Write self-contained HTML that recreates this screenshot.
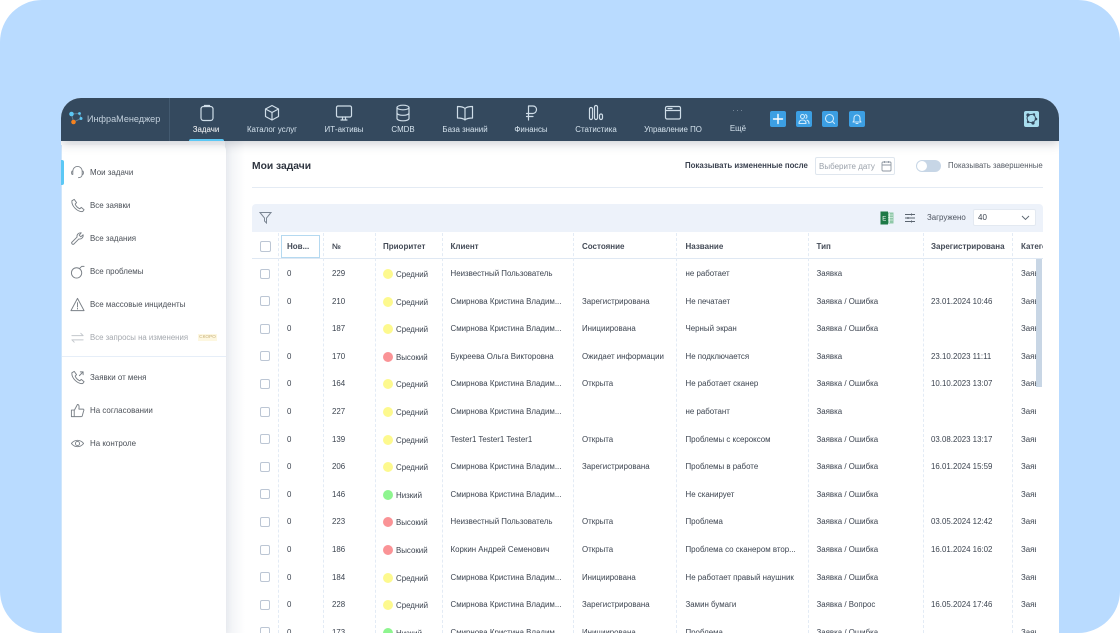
<!DOCTYPE html>
<html lang="ru">
<head>
<meta charset="utf-8">
<style>
html,body{margin:0;padding:0;width:1120px;height:633px;overflow:hidden;background:#fff}
*{box-sizing:border-box}
body{font-family:"Liberation Sans",sans-serif;font-size:7.9px;color:#3c4450}
.bg{position:absolute;left:0;top:0;width:1120px;height:633px;background:#b9dbff;border-radius:42px;overflow:hidden}
.win{position:absolute;left:61px;top:98px;width:998px;height:535px;background:#fff;border-radius:20px 20px 0 0;overflow:hidden;filter:blur(.3px)}
.abs,.nav,.si,.sic,.bb,.v,.r,.r span{position:absolute}
.top{position:absolute;left:0;top:0;width:998px;height:43px;background:#34495e;box-shadow:0 2px 10px rgba(40,50,70,.25);z-index:3}
.nav{top:27px;color:#d5e3ee;font-size:7.9px;white-space:nowrap;transform:translateX(-50%);line-height:10px}
.ni{position:absolute;top:6px;width:18px;height:18px;fill:none;stroke:#cfdde8;stroke-width:1.2;stroke-linecap:round;stroke-linejoin:round}
.bb{top:13px;width:16px;height:16px;border-radius:2px;background:#3c9fe3}
.bb svg{position:absolute;left:2px;top:2px;width:12px;height:12px;fill:none;stroke:#cfeafb;stroke-width:1.1;stroke-linecap:round;stroke-linejoin:round}
.main-sh{position:absolute;left:164px;top:43px;width:20px;height:492px;background:linear-gradient(90deg,#eef0f4,#fff)}
.side{position:absolute;left:0;top:47px;width:165px;height:488px;background:#fff;border-radius:0 5px 0 0;box-shadow:2px 0 6px rgba(60,70,90,.05);z-index:2;border-left:1px solid #cfe6fb}
.si{left:29px;white-space:nowrap;line-height:10px;font-size:7.95px;color:#4a4f57;z-index:2}
.sic{left:9px;width:15px;height:15px;fill:none;stroke:#7a8087;stroke-width:1;stroke-linecap:round;stroke-linejoin:round;z-index:2;margin-top:.5px}
.v{top:135px;width:0;height:400px;border-left:1px dashed #e3ebf5}
.r{left:191px;width:784px;height:27px;overflow:hidden;z-index:1}
.r span{top:9px;line-height:10px;white-space:nowrap}
.c{left:8px;top:8.5px!important;width:10px;height:10px;border:1px solid #bcc6d4;border-radius:2px}
.n{left:35px}.i{left:80px}.d{left:131px;top:9px!important;width:10px;height:10px;border-radius:50%}
.p{left:144px;top:10px!important}.k{left:198.5px}.s{left:330px}.t{left:433.5px}.y{left:564.5px}.g{left:679px}.z{left:769px}
.Y{background:#fdf98e}.R{background:#fa9396}.G{background:#8ef58f}
.th{position:absolute;top:144px;line-height:10px;font-weight:bold;font-size:8px;color:#444b57;white-space:nowrap}
</style>
</head>
<body>
<div class="bg"></div>
<div class="win">
  <div class="top">
    <svg class="abs" style="left:7px;top:12px;width:16px;height:16px" viewBox="0 0 16 16"><path d="M3.500 4L11.500 3.500L13 8.500L5.500 12L3.500 4" fill="none" stroke="#5f7a90" stroke-width="1"/><circle cx="3.500" cy="4" r="2.300" fill="#5cc8f5"/><circle cx="11.500" cy="3.500" r="1.400" fill="#5cc8f5"/><circle cx="13" cy="8.500" r="1.500" fill="#5cc8f5"/><circle cx="5.500" cy="12" r="2.300" fill="#f5821f"/></svg>
    <div class="abs" style="left:26px;top:15px;color:#c3d0dc;font-size:9.100px;line-height:12px;white-space:nowrap">ИнфраМенеджер</div>
    <div class="abs" style="left:108px;top:0;width:1px;height:43px;background:#435a70"></div>

    <svg class="ni" style="left:137px" viewBox="0 0 18 18"><rect x="3" y="2.500" width="12" height="14" rx="2.500"/><path d="M6.500 2.500V1.500H11.500V2.500"/></svg>
    <div class="nav" style="left:145px;color:#fff">Задачи</div>
    <div class="abs" style="left:128px;top:41px;width:35px;height:2px;background:#5cc8f5;border-radius:2px 2px 0 0"></div>

    <svg class="ni" style="left:202px" viewBox="0 0 18 18"><path d="M9 1.500L15.500 5V12.500L9 16L2.500 12.500V5ZM2.500 5L9 8.500L15.500 5M9 8.500V16"/></svg>
    <div class="nav" style="left:211px">Каталог услуг</div>

    <svg class="ni" style="left:274px" viewBox="0 0 18 18"><rect x="1.500" y="2" width="15" height="11" rx="1.500"/><path d="M7.500 13V15.500M10.500 13V15.500M6 16H12"/></svg>
    <div class="nav" style="left:283px">ИТ-активы</div>

    <svg class="ni" style="left:333px" viewBox="0 0 18 18"><ellipse cx="9" cy="3.500" rx="6" ry="2.300"/><path d="M3 3.500V14.500C3 15.800 5.700 16.800 9 16.800S15 15.800 15 14.500V3.500M3 9C3 10.300 5.700 11.300 9 11.300S15 10.300 15 9"/></svg>
    <div class="nav" style="left:342px">CMDB</div>

    <svg class="ni" style="left:395px" viewBox="0 0 18 18"><path d="M9 4.500C7.500 3 5 2.500 1.500 2.500V14C5 14 7.500 14.500 9 16C10.500 14.500 13 14 16.500 14V2.500C13 2.500 10.500 3 9 4.500ZM9 4.500V16"/></svg>
    <div class="nav" style="left:404px">База знаний</div>

    <svg class="ni" style="left:461px" viewBox="0 0 18 18"><path d="M6.500 16V2H11C13 2 14.500 3.500 14.500 5.500S13 9.500 11 9.500H4.500M4.500 12.500H11"/></svg>
    <div class="nav" style="left:470px">Финансы</div>

    <svg class="ni" style="left:526px" viewBox="0 0 18 18"><rect x="2.500" y="3.500" width="3" height="12" rx="1.500"/><rect x="7.500" y="1.500" width="3" height="14" rx="1.500"/><rect x="12.500" y="10" width="3" height="5.500" rx="1.500"/></svg>
    <div class="nav" style="left:535px">Статистика</div>

    <svg class="ni" style="left:603px" viewBox="0 0 18 18"><rect x="1.500" y="2.500" width="15" height="12.500" rx="1.500"/><path d="M1.500 6.500H16.500M4 4.500H8"/></svg>
    <div class="nav" style="left:612px">Управление ПО</div>

    <div class="abs" style="left:671px;top:7px;color:#7d8f9f;font-size:9px;line-height:10px;letter-spacing:1px">···</div>
    <div class="nav" style="left:677px;top:26px">Ещё</div>

    <div class="bb" style="left:709px"><svg viewBox="0 0 12 12" style="stroke:#fff;stroke-width:1.400"><path d="M6 1.500V10.500M1.500 6H10.500"/></svg></div>
    <div class="bb" style="left:735px"><svg viewBox="0 0 12 12"><circle cx="4.500" cy="3.500" r="2"/><path d="M1 10.500C1 8 2.500 7 4.500 7S8 8 8 10.500H1M7.500 1.700A2 2 0 0 1 8 5.300M9 7.200C10.300 7.700 11 8.800 11 10.500"/></svg></div>
    <div class="bb" style="left:761px"><svg viewBox="0 0 12 12"><circle cx="5.500" cy="5.500" r="4"/><path d="M8.500 8.500L10.500 10.500"/></svg></div>
    <div class="bb" style="left:788px"><svg viewBox="0 0 12 12"><path d="M2 9H10L9 7.500V5A3 3 0 0 0 3 5V7.500ZM5 10.500H7"/></svg></div>

    <div class="abs" style="left:963px;top:13px;width:15px;height:16px;background:#a9deef;border-radius:2px">
      <svg width="15" height="16" viewBox="0 0 15 16" style="position:absolute;left:0;top:0"><path d="M4 4L10 3L12 8L9 12L4 11L3 7Z" fill="none" stroke="#34495e" stroke-width="1"/><circle cx="4" cy="4" r="1.600" fill="#34495e"/><circle cx="10" cy="3.500" r="1.200" fill="#34495e"/><circle cx="12" cy="8" r="1.300" fill="#34495e"/><circle cx="9" cy="12" r="1.600" fill="#34495e"/><circle cx="4" cy="11" r="1.200" fill="#34495e"/></svg>
    </div>
  </div>

  <div class="main-sh"></div>
  <div class="side"></div>
  <div class="abs" style="left:0;top:62px;width:3px;height:25px;background:#5cc8f5;border-radius:0 2px 2px 0;z-index:2"></div>

  <svg class="sic" style="top:66px" viewBox="0 0 16 16"><path d="M3 8V6.500A5 5 0 0 1 13 6.500V8M3 6.500H2.200C1.500 7 1.500 9.500 2.200 10H3ZM13 6.500H13.800C14.500 7 14.500 9.500 13.800 10H13ZM13 10C13 12.500 11 13.500 9 13.500"/></svg>
  <div class="si" style="top:70px">Мои задачи</div>
  <svg class="sic" style="top:99px" viewBox="0 0 16 16"><path d="M2 3L4.500 1.500L7 5L5.500 6.500C6.500 9 8 10.500 10.500 11.500L12 10L15 12.500L13.500 14.500C8 15 1.500 8.500 2 3Z"/></svg>
  <div class="si" style="top:103px">Все заявки</div>
  <svg class="sic" style="top:132px" viewBox="0 0 16 16"><path d="M2 12L7.500 6.500C7 4 9 1.500 12 2L9.800 4.500L11.500 6.200L14 4C14.500 7 12 9 9.500 8.500L4 14C3 15 1 13 2 12Z"/></svg>
  <div class="si" style="top:136px">Все задания</div>
  <svg class="sic" style="top:165px" viewBox="0 0 16 16"><circle cx="7" cy="9.500" r="5.500"/><path d="M10.500 4.500L12.500 2.500H15"/></svg>
  <div class="si" style="top:169px">Все проблемы</div>
  <svg class="sic" style="top:198px" viewBox="0 0 16 16"><path d="M8 1.500L15 14.500H1ZM8 6V10.500M8 12V12.800"/></svg>
  <div class="si" style="top:202px">Все массовые инциденты</div>
  <svg class="sic" style="top:231px;stroke:#c3c7cc" viewBox="0 0 16 16"><path d="M2 6H14M11.500 3.500L14 6M14 10.500H2M4.500 13L2 10.500"/></svg>
  <div class="si" style="top:235px;color:#a4a8ae;font-size:7.800px">Все запросы на изменения</div>
  <div class="abs" style="left:137px;top:236px;width:19px;height:7px;background:#fdf7e0;color:#c9b27a;font-size:4.800px;line-height:7px;text-align:center;z-index:2">СКОРО</div>
  <div class="abs" style="left:1px;top:258px;width:164px;height:1px;background:#e6eef8;z-index:2"></div>
  <svg class="sic" style="top:271px" viewBox="0 0 16 16"><path d="M2 3L4.500 1.500L7 5L5.500 6.500C6.500 9 8 10.500 10.500 11.500L12 10L15 12.500L13.500 14.500C8 15 1.500 8.500 2 3ZM10 6L14 2M11 2H14V5"/></svg>
  <div class="si" style="top:275px">Заявки от меня</div>
  <svg class="sic" style="top:304px" viewBox="0 0 16 16"><path d="M1.500 7.500H4.500V14.500H1.500ZM4.500 8L8 1.500C9.500 1.500 10 3 9.500 6.500H14C15 6.500 15 8 14.500 8.500L13 14C12.800 14.500 12.500 14.500 12 14.500H4.500"/></svg>
  <div class="si" style="top:308px">На согласовании</div>
  <svg class="sic" style="top:337px" viewBox="0 0 16 16"><path d="M1.500 8C5 3.500 11 3.500 14.500 8C11 12.500 5 12.500 1.500 8Z"/><circle cx="8" cy="8" r="2.200"/></svg>
  <div class="si" style="top:341px">На контроле</div>

  <div class="abs" style="left:191px;top:62px;font-size:10.300px;font-weight:bold;color:#2f3540;line-height:13px">Мои задачи</div>
  <div class="abs" style="left:624px;top:63px;font-weight:bold;font-size:7.850px;color:#3b4250;line-height:10px;white-space:nowrap">Показывать измененные после</div>
  <div class="abs" style="left:754px;top:59px;width:80px;height:18px;border:1px solid #dfe6ee;border-radius:2px;color:#9aa1aa;padding:4px 0 0 3px;line-height:10px;font-size:8px">Выберите дату
    <svg class="abs" style="left:65px;top:2px;width:11px;height:12px;fill:none;stroke:#8d96a1;stroke-width:.9" viewBox="0 0 11 12"><rect x="1" y="2" width="9" height="9" rx="1"/><path d="M1 5H10M3.500 1V3M7.500 1V3"/></svg>
  </div>
  <div class="abs" style="left:855px;top:62px;width:25px;height:12px;background:#c7d6e6;border-radius:6px"><div class="abs" style="left:1px;top:1px;width:10px;height:10px;background:#fff;border-radius:50%"></div></div>
  <div class="abs" style="left:887px;top:63px;width:95px;overflow:hidden;line-height:10px;white-space:nowrap;font-size:7.800px;color:#565c66">Показывать завершенные</div>
  <div class="abs" style="left:191px;top:89px;width:791px;height:1px;background:#e4ebf4"></div>

  <div class="abs" style="left:191px;top:106px;width:791px;height:28px;background:#edf2fa;border-radius:4px 4px 0 0"></div>
  <svg class="abs" style="left:198px;top:113px;width:13px;height:13px;fill:none;stroke:#7c8794;stroke-width:1" viewBox="0 0 13 13"><path d="M1 1.500H12L7.500 7V12L5.500 10V7Z"/></svg>
  <svg class="abs" style="left:819px;top:113px;width:14px;height:14px" viewBox="0 0 14 14"><rect x="5" y="1.500" width="8.500" height="11" fill="#8fc8a8"/><path d="M6 4H13M6 6.500H13M6 9H13M9.500 2V12" stroke="#fff" stroke-width=".6"/><rect x=".5" y=".5" width="7.500" height="13" fill="#1f7a47"/><text x="2.300" y="9.500" font-size="6" fill="#fff" font-family="Liberation Sans">E</text></svg>
  <svg class="abs" style="left:843px;top:114px;width:12px;height:12px;fill:none;stroke:#5b6570;stroke-width:1" viewBox="0 0 12 12"><path d="M1 2.500H11M1 6H11M1 9.500H11"/><path d="M7.500 1.500V3.500M4 5V7M7.500 8.500V10.500"/></svg>
  <div class="abs" style="left:866px;top:115px;line-height:10px;font-size:7.900px;color:#4d5460">Загружено</div>
  <div class="abs" style="left:912px;top:111px;width:63px;height:17px;background:#fff;border-radius:2px;border:1px solid #e3e9f1;padding:3px 0 0 4px;line-height:10px;font-size:8px">40
    <svg class="abs" style="left:47px;top:5px;width:9px;height:6px;fill:none;stroke:#5b6570;stroke-width:.9" viewBox="0 0 9 6"><path d="M1 1L4.500 4.500L8 1"/></svg>
  </div>

  <div class="abs" style="left:191px;top:160px;width:791px;height:1px;background:#dfe8f3"></div>
  <div class="v" style="left:217px"></div><div class="v" style="left:262px"></div><div class="v" style="left:314px"></div><div class="v" style="left:381px"></div><div class="v" style="left:512px"></div><div class="v" style="left:615px"></div><div class="v" style="left:747px"></div><div class="v" style="left:862px"></div><div class="v" style="left:951px"></div>

  <div class="abs" style="left:199px;top:143px;width:11px;height:11px;border:1px solid #bcc6d4;border-radius:2px"></div>
  <div class="abs" style="left:220px;top:137px;width:39px;height:23px;border:1px solid #b5d9f0"></div>
  <div class="th" style="left:226px">Нов...</div>
  <div class="th" style="left:271px">№</div>
  <div class="th" style="left:322px">Приоритет</div>
  <div class="th" style="left:389.500px">Клиент</div>
  <div class="th" style="left:521px">Состояние</div>
  <div class="th" style="left:624.500px">Название</div>
  <div class="th" style="left:755.500px">Тип</div>
  <div class="th" style="left:870px">Зарегистрирована</div>
  <div class="th" style="left:960px;width:22px;overflow:hidden">Категория</div>

  <div class="r" style="top:162px"><span class="c"></span><span class="n">0</span><span class="i">229</span><span class="d Y"></span><span class="p">Средний</span><span class="k">Неизвестный Пользователь</span><span class="t">не работает</span><span class="y">Заявка</span><span class="z">Заявка</span></div>
  <div class="r" style="top:189.600px"><span class="c"></span><span class="n">0</span><span class="i">210</span><span class="d Y"></span><span class="p">Средний</span><span class="k">Смирнова Кристина Владим...</span><span class="s">Зарегистрирована</span><span class="t">Не печатает</span><span class="y">Заявка / Ошибка</span><span class="g">23.01.2024 10:46</span><span class="z">Заявка</span></div>
  <div class="r" style="top:217.200px"><span class="c"></span><span class="n">0</span><span class="i">187</span><span class="d Y"></span><span class="p">Средний</span><span class="k">Смирнова Кристина Владим...</span><span class="s">Инициирована</span><span class="t">Черный экран</span><span class="y">Заявка / Ошибка</span><span class="z">Заявка</span></div>
  <div class="r" style="top:244.800px"><span class="c"></span><span class="n">0</span><span class="i">170</span><span class="d R"></span><span class="p">Высокий</span><span class="k">Букреева Ольга Викторовна</span><span class="s">Ожидает информации</span><span class="t">Не подключается</span><span class="y">Заявка</span><span class="g">23.10.2023 11:11</span><span class="z">Заявка</span></div>
  <div class="r" style="top:272.400px"><span class="c"></span><span class="n">0</span><span class="i">164</span><span class="d Y"></span><span class="p">Средний</span><span class="k">Смирнова Кристина Владим...</span><span class="s">Открыта</span><span class="t">Не работает сканер</span><span class="y">Заявка / Ошибка</span><span class="g">10.10.2023 13:07</span><span class="z">Заявка</span></div>
  <div class="r" style="top:300px"><span class="c"></span><span class="n">0</span><span class="i">227</span><span class="d Y"></span><span class="p">Средний</span><span class="k">Смирнова Кристина Владим...</span><span class="t">не работант</span><span class="y">Заявка</span><span class="z">Заявка</span></div>
  <div class="r" style="top:327.600px"><span class="c"></span><span class="n">0</span><span class="i">139</span><span class="d Y"></span><span class="p">Средний</span><span class="k">Tester1 Tester1 Tester1</span><span class="s">Открыта</span><span class="t">Проблемы с ксероксом</span><span class="y">Заявка / Ошибка</span><span class="g">03.08.2023 13:17</span><span class="z">Заявка</span></div>
  <div class="r" style="top:355.200px"><span class="c"></span><span class="n">0</span><span class="i">206</span><span class="d Y"></span><span class="p">Средний</span><span class="k">Смирнова Кристина Владим...</span><span class="s">Зарегистрирована</span><span class="t">Проблемы в работе</span><span class="y">Заявка / Ошибка</span><span class="g">16.01.2024 15:59</span><span class="z">Заявка</span></div>
  <div class="r" style="top:382.800px"><span class="c"></span><span class="n">0</span><span class="i">146</span><span class="d G"></span><span class="p">Низкий</span><span class="k">Смирнова Кристина Владим...</span><span class="t">Не сканирует</span><span class="y">Заявка / Ошибка</span><span class="z">Заявка</span></div>
  <div class="r" style="top:410.400px"><span class="c"></span><span class="n">0</span><span class="i">223</span><span class="d R"></span><span class="p">Высокий</span><span class="k">Неизвестный Пользователь</span><span class="s">Открыта</span><span class="t">Проблема</span><span class="y">Заявка / Ошибка</span><span class="g">03.05.2024 12:42</span><span class="z">Заявка</span></div>
  <div class="r" style="top:438px"><span class="c"></span><span class="n">0</span><span class="i">186</span><span class="d R"></span><span class="p">Высокий</span><span class="k">Коркин Андрей Семенович</span><span class="s">Открыта</span><span class="t">Проблема со сканером втор...</span><span class="y">Заявка / Ошибка</span><span class="g">16.01.2024 16:02</span><span class="z">Заявка</span></div>
  <div class="r" style="top:465.600px"><span class="c"></span><span class="n">0</span><span class="i">184</span><span class="d Y"></span><span class="p">Средний</span><span class="k">Смирнова Кристина Владим...</span><span class="s">Инициирована</span><span class="t">Не работает правый наушник</span><span class="y">Заявка / Ошибка</span><span class="z">Заявка</span></div>
  <div class="r" style="top:493.200px"><span class="c"></span><span class="n">0</span><span class="i">228</span><span class="d Y"></span><span class="p">Средний</span><span class="k">Смирнова Кристина Владим...</span><span class="s">Зарегистрирована</span><span class="t">Замин бумаги</span><span class="y">Заявка / Вопрос</span><span class="g">16.05.2024 17:46</span><span class="z">Заявка</span></div>
  <div class="r" style="top:520.800px"><span class="c"></span><span class="n">0</span><span class="i">173</span><span class="d G"></span><span class="p">Низкий</span><span class="k">Смирнова Кристина Владим...</span><span class="s">Инициирована</span><span class="t">Проблема</span><span class="y">Заявка / Ошибка</span><span class="z">Заявка</span></div>

  <div class="abs" style="left:975px;top:161px;width:7px;height:374px;background:#fff;z-index:2"></div>
  <div class="abs" style="left:975px;top:161px;width:6px;height:128px;background:#c8d6e5;z-index:2"></div>
</div>
</body>
</html>
